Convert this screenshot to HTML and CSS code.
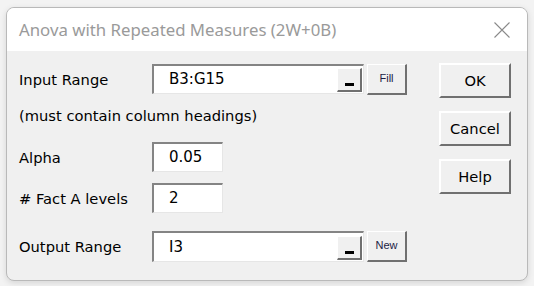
FILE: index.html
```html
<!DOCTYPE html>
<html lang="en">
<head>
<meta charset="utf-8">
<title>Anova with Repeated Measures (2W+0B)</title>
<link rel="stylesheet" href="styles.css">
</head>
<body>
<div class="window">
  <div class="titlebar">
    <span class="title">Anova with Repeated Measures (2W+0B)</span>
    <svg class="close" width="16" height="16" viewBox="0 0 16 16" aria-hidden="true">
      <path d="M0.5 0.5 L15.5 15.5 M15.5 0.5 L0.5 15.5" stroke="#8a8a8a" stroke-width="1.1" fill="none"/>
    </svg>
  </div>
  <div class="content">
    <div class="form">
      <div class="row row-input">
        <span class="label">Input Range</span>
        <div class="field field-wide">
          <span class="value">B3:G15</span>
          <span class="pick"><span class="bar"></span></span>
        </div>
        <span class="small-btn">Fill</span>
      </div>
      <div class="note">(must contain column headings)</div>
      <div class="row row-alpha">
        <span class="label">Alpha</span>
        <div class="field field-short"><span class="value">0.05</span></div>
      </div>
      <div class="row row-fact">
        <span class="label"># Fact A levels</span>
        <div class="field field-short"><span class="value">2</span></div>
      </div>
      <div class="row row-output">
        <span class="label">Output Range</span>
        <div class="field field-wide">
          <span class="value">I3</span>
          <span class="pick"><span class="bar"></span></span>
        </div>
        <span class="small-btn">New</span>
      </div>
    </div>
    <div class="buttons">
      <span class="btn">OK</span>
      <span class="btn">Cancel</span>
      <span class="btn">Help</span>
    </div>
  </div>
</div>
</body>
</html>
```

FILE: styles.css
```css
* { box-sizing: border-box; }

html, body {
  margin: 0;
  padding: 0;
  background: #f3f3f3;
}

body {
  width: 534px;
  height: 286px;
  overflow: hidden;
  padding: 7px 0 0 6px;
}

.window {
  width: 522px;
  height: 274px;
  border: 1px solid #b9b9b9;
  border-radius: 8px;
  background: #f0f0f0;
  overflow: hidden;
  box-shadow: 0 2px 6px rgba(0, 0, 0, 0.12);
  display: flex;
  flex-direction: column;
}

.titlebar {
  height: 43px;
  flex: none;
  background: #ffffff;
  display: flex;
  align-items: center;
  padding: 0 17px 0 12px;
}

.title {
  font-family: "Noto Sans", "Open Sans", sans-serif;
  font-size: 16.8px;
  color: #9a9a9a;
  flex: 1;
  padding-bottom: 1px;
}

.close { display: block; margin-top: 1px; }

.content {
  flex: 1;
  display: flex;
  font-family: "DejaVu Sans", Verdana, sans-serif;
  font-size: 14.7px;
  color: #000;
}

.form {
  flex: 1;
  padding: 13px 0 0 12px;
}

.row {
  display: flex;
  align-items: center;
}

.label {
  width: 133px;
  flex: none;
}

.row-input { height: 30px; }
.row-alpha { height: 30px; margin-top: 16px; }
.row-fact { height: 30px; margin-top: 11px; }
.row-output { height: 31px; margin-top: 18px; }

.note {
  height: 20px;
  line-height: 20px;
  margin-top: 12px;
}

.field {
  height: 100%;
  background: #ffffff;
  border-top: 2px solid #848484;
  border-left: 2px solid #848484;
  border-right: 1px solid #e6e6e6;
  border-bottom: 1px solid #e6e6e6;
  display: flex;
  align-items: center;
  padding-left: 15px;
  font-size: 15px;
}

.field-wide { width: 212px; padding-right: 1px; }
.field-short { width: 71px; }

.value { flex: 1; padding-bottom: 1px; }

.pick {
  width: 25px;
  height: 24px;
  margin-top: 1px;
  background: #f0f0f0;
  border-top: 1px solid #ffffff;
  border-left: 1px solid #ffffff;
  border-right: 2px solid #707070;
  border-bottom: 2px solid #707070;
  display: flex;
  align-items: flex-end;
  justify-content: center;
  padding-bottom: 4px;
}

.bar {
  width: 9px;
  height: 3px;
  background: #000;
}

.small-btn {
  width: 40px;
  height: 31px;
  margin-left: 3px;
  background: #f0f0f0;
  border-top: 1px solid #ffffff;
  border-left: 1px solid #ffffff;
  border-right: 2px solid #707070;
  border-bottom: 2px solid #707070;
  display: flex;
  align-items: center;
  justify-content: center;
  font-family: "Liberation Sans", Arial, sans-serif;
  font-size: 11px;
  color: #1c1c44;
  padding-bottom: 2px;
}

.buttons {
  width: 72px;
  flex: none;
  margin-right: 16px;
  padding-top: 12px;
  display: flex;
  flex-direction: column;
  gap: 13px;
}

.btn {
  height: 35px;
  background: #f0f0f0;
  border-top: 2px solid #ffffff;
  border-left: 2px solid #ffffff;
  border-right: 2px solid #707070;
  border-bottom: 2px solid #707070;
  display: flex;
  align-items: center;
  justify-content: center;
  padding-bottom: 1px;
}
```
